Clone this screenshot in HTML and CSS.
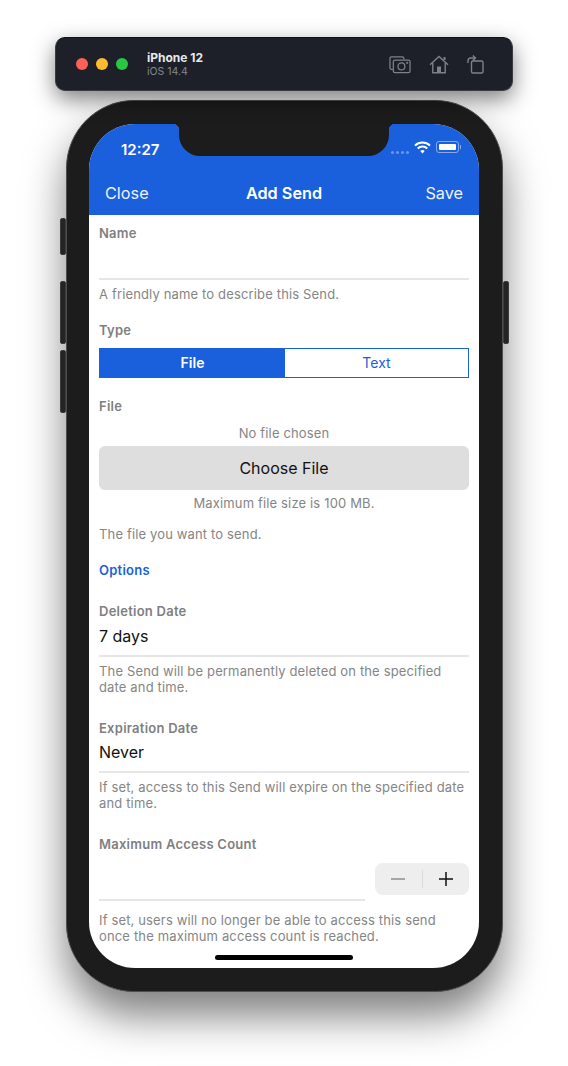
FILE: index.html
```html
<!DOCTYPE html>
<html lang="en">
<head>
    <meta charset="UTF-8">
    <meta name="viewport" content="width=device-width, initial-scale=1.0">
    <title>Add Send</title>
    <link rel="stylesheet" href="styles.css">
</head>
<body>

<div class="sim-bar">
    <div class="lights">
        <span class="light red"></span>
        <span class="light yellow"></span>
        <span class="light green"></span>
    </div>
    <div class="sim-name">
        <div class="device">iPhone 12</div>
        <div class="os">iOS 14.4</div>
    </div>
    <div class="sim-icons">
        <svg width="22" height="19" viewBox="0 0 23 19" fill="none" stroke="#7d828a" stroke-width="1.3">
            <path d="M4 14.500H2.500a1.500 1.500 0 0 1-1.500-1.500V3a1.500 1.500 0 0 1 1.500-1.500H14a1.500 1.500 0 0 1 1.500 1.500v1"/>
            <rect x="4.500" y="4.800" width="17.500" height="13.200" rx="1.800"/>
            <circle cx="13" cy="11.500" r="3.600"/>
            <circle cx="19" cy="7.800" r=".5"/>
        </svg>
        <svg width="20" height="19" viewBox="0 0 20 19" fill="none" stroke="#7d828a" stroke-width="1.4">
            <path d="M1 9.800 10 1.500l9 8.300"/>
            <path d="M3.800 8v9.800h12.400V8"/>
            <path d="M15.500 5V2" stroke-width="2"/>
            <rect x="8" y="11.500" width="4" height="6.300" fill="#7d828a" stroke="none"/>
        </svg>
        <svg width="17" height="19" viewBox="0 0 17 19" fill="none" stroke="#7d828a" stroke-width="1.4">
            <rect x="4.500" y="6" width="11.500" height="12" rx="1.500"/>
            <path d="M1 8V5.500a2.500 2.500 0 0 1 2.500-2.500H8"/>
            <path d="M5.800.5 8.500 3 5.800 5.500"/>
        </svg>
    </div>
</div>

<div class="phone">
    <span class="side-btn mute"></span>
    <span class="side-btn vol-up"></span>
    <span class="side-btn vol-down"></span>
    <span class="side-btn power"></span>
    <div class="notch"></div>

    <div class="screen">
        <div class="header">
            <div class="status">
                <span class="time">12:27</span>
                <div class="status-icons">
                    <span class="dots"><i></i><i></i><i></i><i></i></span>
                    <svg width="17" height="13" viewBox="0 0 17 13" fill="none" stroke="#fff" stroke-width="2">
                        <path d="M1 4.600a10.800 10.800 0 0 1 15 0"/>
                        <path d="M3.700 7.400a7 7 0 0 1 9.600 0"/>
                        <path d="M8.500 12.500 6.300 10.100a3.200 3.200 0 0 1 4.400 0z" fill="#fff" stroke="none"/>
                    </svg>
                    <span class="battery"><i></i></span>
                </div>
            </div>
            <div class="nav">
                <span>Close</span>
                <span class="nav-title">Add Send</span>
                <span class="nav-save">Save</span>
            </div>
        </div>

        <div class="form">
            <div class="label first">Name</div>
            <div class="input-line blank"></div>
            <div class="help">A friendly name to describe this Send.</div>

            <div class="label type">Type</div>
            <div class="segment">
                <div class="seg active">File</div>
                <div class="seg">Text</div>
            </div>

            <div class="label file">File</div>
            <div class="help center no-file">No file chosen</div>
            <div class="choose">Choose File</div>
            <div class="help center max-size">Maximum file size is 100 MB.</div>
            <div class="help gap">The file you want to send.</div>

            <div class="label section">Options</div>

            <div class="label spaced">Deletion Date</div>
            <div class="input-line value">7 days</div>
            <div class="help">The Send will be permanently deleted on the specified date and time.</div>

            <div class="label spaced">Expiration Date</div>
            <div class="input-line value short">Never</div>
            <div class="help">If set, access to this Send will expire on the specified date and time.</div>

            <div class="label spaced">Maximum Access Count</div>
            <div class="count-row">
                <div class="input-line count"></div>
                <div class="stepper">
                    <svg width="14" height="14" viewBox="0 0 14 14" stroke="#8e8e8e" stroke-width="1.500"><path d="M0 7h14"/></svg>
                    <span class="step-sep"></span>
                    <svg width="14" height="14" viewBox="0 0 14 14" stroke="#111" stroke-width="1.500"><path d="M0 7h14M7 0v14"/></svg>
                </div>
            </div>
            <div class="help count-help">If set, users will no longer be able to access this send once the maximum access count is reached.</div>
        </div>

        <div class="home-bar"></div>
    </div>
</div>

</body>
</html>
```

FILE: styles.css
```css
* {
    box-sizing: border-box;
}

body {
    margin: 0;
    min-height: 1066px;
    padding: 37px 0 0 55px;
    background: #fff;
    font-family: Inter, "Liberation Sans", sans-serif;
}

/* simulator title bar */
.sim-bar {
    position: relative;
    z-index: 2;
    width: 458px;
    height: 54px;
    display: flex;
    align-items: center;
    padding: 0 28px 0 20px;
    background: #1d2029;
    border: 1px solid #3a3c42;
    border-top-color: #111;
    border-radius: 10px;
    box-shadow: 0 8px 22px rgba(0, 0, 0, .5);
}

.lights {
    display: flex;
    gap: 8px;
}

.light {
    width: 12px;
    height: 12px;
    border-radius: 50%;
}

.red { background: #fe5f57; }
.yellow { background: #febc2e; }
.green { background: #28c840; }

.sim-name {
    margin-left: 19px;
}

.device {
    font-size: 12px;
    line-height: 15px;
    font-weight: 700;
    color: #e8e9ea;
}

.os {
    font-size: 10.500px;
    line-height: 14px;
    color: #85888e;
}

.sim-icons {
    margin-left: auto;
    display: flex;
    align-items: center;
    gap: 18px;
}

/* phone body */
.phone {
    position: relative;
    width: 437px;
    height: 892px;
    margin: 9px 0 0 11px;
    padding: 23px 22px;
    background: #1c1c1c;
    border: 1px solid #4e4e4e;
    border-radius: 68px;
    box-shadow: 0 24px 42px rgba(0, 0, 0, .5);
}

.side-btn {
    position: absolute;
    width: 6px;
    background: #242424;
    border: 1px solid #3c3c3c;
    border-radius: 2px;
}

.mute { left: -7px; top: 117px; height: 37px; }
.vol-up { left: -7px; top: 180px; height: 63px; }
.vol-down { left: -7px; top: 249px; height: 63px; }
.power { right: -7px; top: 180px; height: 63px; }

.notch {
    position: absolute;
    z-index: 1;
    left: 112px;
    top: 23px;
    width: 210px;
    height: 32px;
    background: #1c1c1c;
    border-radius: 0 0 21px 21px;
}

.notch::before,
.notch::after {
    content: "";
    position: absolute;
    top: 0;
    width: 6px;
    height: 6px;
}

.notch::before {
    left: -6px;
    background: radial-gradient(circle at 0 100%, transparent 6px, #1c1c1c 6.500px);
}

.notch::after {
    right: -6px;
    background: radial-gradient(circle at 100% 100%, transparent 6px, #1c1c1c 6.500px);
}

.screen {
    position: relative;
    width: 390px;
    height: 844px;
    background: #fff;
    border-radius: 46px;
    overflow: hidden;
}

.header {
    height: 91px;
    background: #1a5fdc;
    color: #fff;
}

.status {
    height: 47px;
    display: flex;
    align-items: center;
    justify-content: space-between;
    padding: 3px 20px 0 32px;
}

.time {
    font-size: 15px;
    font-weight: 600;
}

.status-icons {
    display: flex;
    align-items: center;
    gap: 5px;
    margin-bottom: 4px;
}

.dots {
    display: flex;
    gap: 2px;
    margin-top: 11px;
}

.dots i {
    width: 3px;
    height: 3px;
    border-radius: 50%;
    background: #6d97e8;
}

.battery {
    position: relative;
    width: 23px;
    height: 12px;
    padding: 2px;
    border: 1px solid #86aaec;
    border-radius: 3px;
}

.battery::after {
    content: "";
    position: absolute;
    right: -3px;
    top: 3px;
    width: 1px;
    height: 4px;
    background: #86aaec;
}

.battery i {
    display: block;
    height: 100%;
    background: #fff;
    border-radius: 1px;
}

.nav {
    display: grid;
    grid-template-columns: 1fr auto 1fr;
    align-items: center;
    height: 44px;
    padding: 0 16px;
    font-size: 16.250px;
    color: #eef3fd;
}

.nav-title {
    font-weight: 600;
    color: #fff;
}

.nav-save {
    text-align: right;
}

/* form */
.form {
    padding: 0 10px;
}

.label {
    font-size: 13px;
    line-height: 16px;
    font-weight: 600;
    letter-spacing: .25px;
    color: #7f7f7f;
}

.label.first { padding-top: 10px; }
.label.type { margin-top: 20px; }
.label.file { margin-top: 20px; }
.label.section { margin-top: 20px; color: #1a5fdc; }
.label.spaced { margin-top: 25px; }

.help {
    font-size: 13px;
    line-height: 16px;
    letter-spacing: .15px;
    color: #858585;
    margin-top: 6px;
}

.help.center { text-align: center; }
.help.no-file { margin-top: 11px; }
.help.max-size { margin-top: 5px; }
.help.gap { margin-top: 15px; }
.help.count-help { margin-top: 11px; }

.input-line {
    border-bottom: 2px solid #e6e6e6;
    font-size: 16px;
    color: #111;
}

.input-line.blank { height: 39px; }

.input-line.value {
    height: 38px;
    padding-top: 7px;
    line-height: 20px;
}

.input-line.value.short {
    height: 37px;
    padding-top: 6px;
}

.segment {
    display: flex;
    height: 30px;
    margin-top: 10px;
    border: 1px solid #1a5fdc;
}

.seg {
    flex: 1;
    text-align: center;
    font-size: 14px;
    line-height: 28px;
    color: #1a5fdc;
}

.seg.active {
    flex: 0 0 185px;
    background: #1a5fdc;
    color: #fff;
    font-weight: 600;
}

.choose {
    height: 44px;
    margin-top: 5px;
    background: #dedede;
    border-radius: 6px;
    text-align: center;
    font-size: 16px;
    line-height: 44px;
    color: #111;
}

.count-row {
    display: flex;
    justify-content: space-between;
    align-items: flex-start;
    height: 49px;
}

.input-line.count {
    width: 266px;
    height: 49px;
}

.stepper {
    display: flex;
    align-items: center;
    justify-content: space-between;
    width: 94px;
    height: 32px;
    margin-top: 11px;
    padding: 0 16px;
    background: #eeeeee;
    border-radius: 8px;
}

.step-sep {
    width: 1px;
    height: 18px;
    background: #dadada;
}

.home-bar {
    position: absolute;
    left: 126px;
    bottom: 8px;
    width: 138px;
    height: 5px;
    border-radius: 3px;
    background: #000;
}
```
